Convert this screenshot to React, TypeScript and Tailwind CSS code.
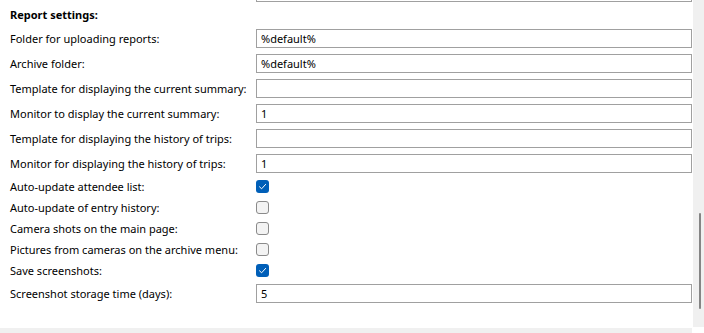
import React from 'react';

interface Setting {
  label: string;
  kind: 'text' | 'check';
  value?: string;
  checked?: boolean;
}

const settings: Setting[] = [
  { label: 'Folder for uploading reports:', kind: 'text', value: '%default%' },
  { label: 'Archive folder:', kind: 'text', value: '%default%' },
  { label: 'Template for displaying the current summary:', kind: 'text', value: '' },
  { label: 'Monitor to display the current summary:', kind: 'text', value: '1' },
  { label: 'Template for displaying the history of trips:', kind: 'text', value: '' },
  { label: 'Monitor for displaying the history of trips:', kind: 'text', value: '1' },
  { label: 'Auto-update attendee list:', kind: 'check', checked: true },
  { label: 'Auto-update of entry history:', kind: 'check', checked: false },
  { label: 'Camera shots on the main page:', kind: 'check', checked: false },
  { label: 'Pictures from cameras on the archive menu:', kind: 'check', checked: false },
  { label: 'Save screenshots:', kind: 'check', checked: true },
  { label: 'Screenshot storage time (days):', kind: 'text', value: '5' },
];

const CheckBox: React.FC<{ checked: boolean }> = ({ checked }) =>
  checked ? (
    <div className="w-[13px] h-[13px] rounded-[3px] bg-[#005fb8] flex items-center justify-center">
      <svg width="9" height="9" viewBox="0 0 9 9" fill="none">
        <path d="M1.5 4.8 L3.6 6.8 L7.6 2.4" stroke="#ffffff" strokeWidth="1" strokeLinecap="round" strokeLinejoin="round" />
      </svg>
    </div>
  ) : (
    <div className="w-[13px] h-[13px] rounded-[3px] border border-[#8a8a8a] bg-[#f3f3f3]" />
  );

const App: React.FC = () => {
  return (
    <div className="w-[704px] h-[333px] bg-white flex overflow-hidden text-black" style={{ fontFamily: '"Noto Sans", "Segoe UI", sans-serif' }}>
      <div className="w-[693px] flex flex-col">
        {/* tail of the previous field */}
        <div className="ml-[256px] w-[436px] h-[2px] border-x border-b border-[#a0a0a0]" />

        <div className="h-[27px] flex items-center pl-[10px] text-[11px] font-bold">Report settings:</div>

        <div className="flex flex-col">
          {settings.map((s, i) => {
            const prev = settings[i - 1];
            let mt = 'mt-0';
            if (i > 0) {
              if (s.kind === 'text' && prev.kind === 'text') mt = 'mt-[6px]';
              else if (s.kind !== prev.kind) mt = 'mt-[3px]';
            }
            return (
              <div key={s.label} className={`flex items-center ${mt} ${s.kind === 'text' ? 'h-[19px]' : 'h-[21px]'}`}>
                <div className="w-[256px] pl-[10px] text-[11px] leading-none whitespace-nowrap">{s.label}</div>
                {s.kind === 'text' ? (
                  <div className="w-[436px] h-[19px] border border-[#a0a0a0] flex items-center pl-[4px] text-[11px] leading-none">
                    {s.value}
                  </div>
                ) : (
                  <CheckBox checked={!!s.checked} />
                )}
              </div>
            );
          })}
        </div>

        <div className="flex-1" />
        <div className="h-[5px] w-[692px] bg-[#f0f0f0]" />
      </div>

      <div className="w-[11px] h-[327px] bg-[#f0f0f0] flex justify-center">
        <div className="mt-[213px] ml-[3px] w-[2px] h-[96px] rounded-full bg-[#858585]" />
      </div>
    </div>
  );
};

export default App;
